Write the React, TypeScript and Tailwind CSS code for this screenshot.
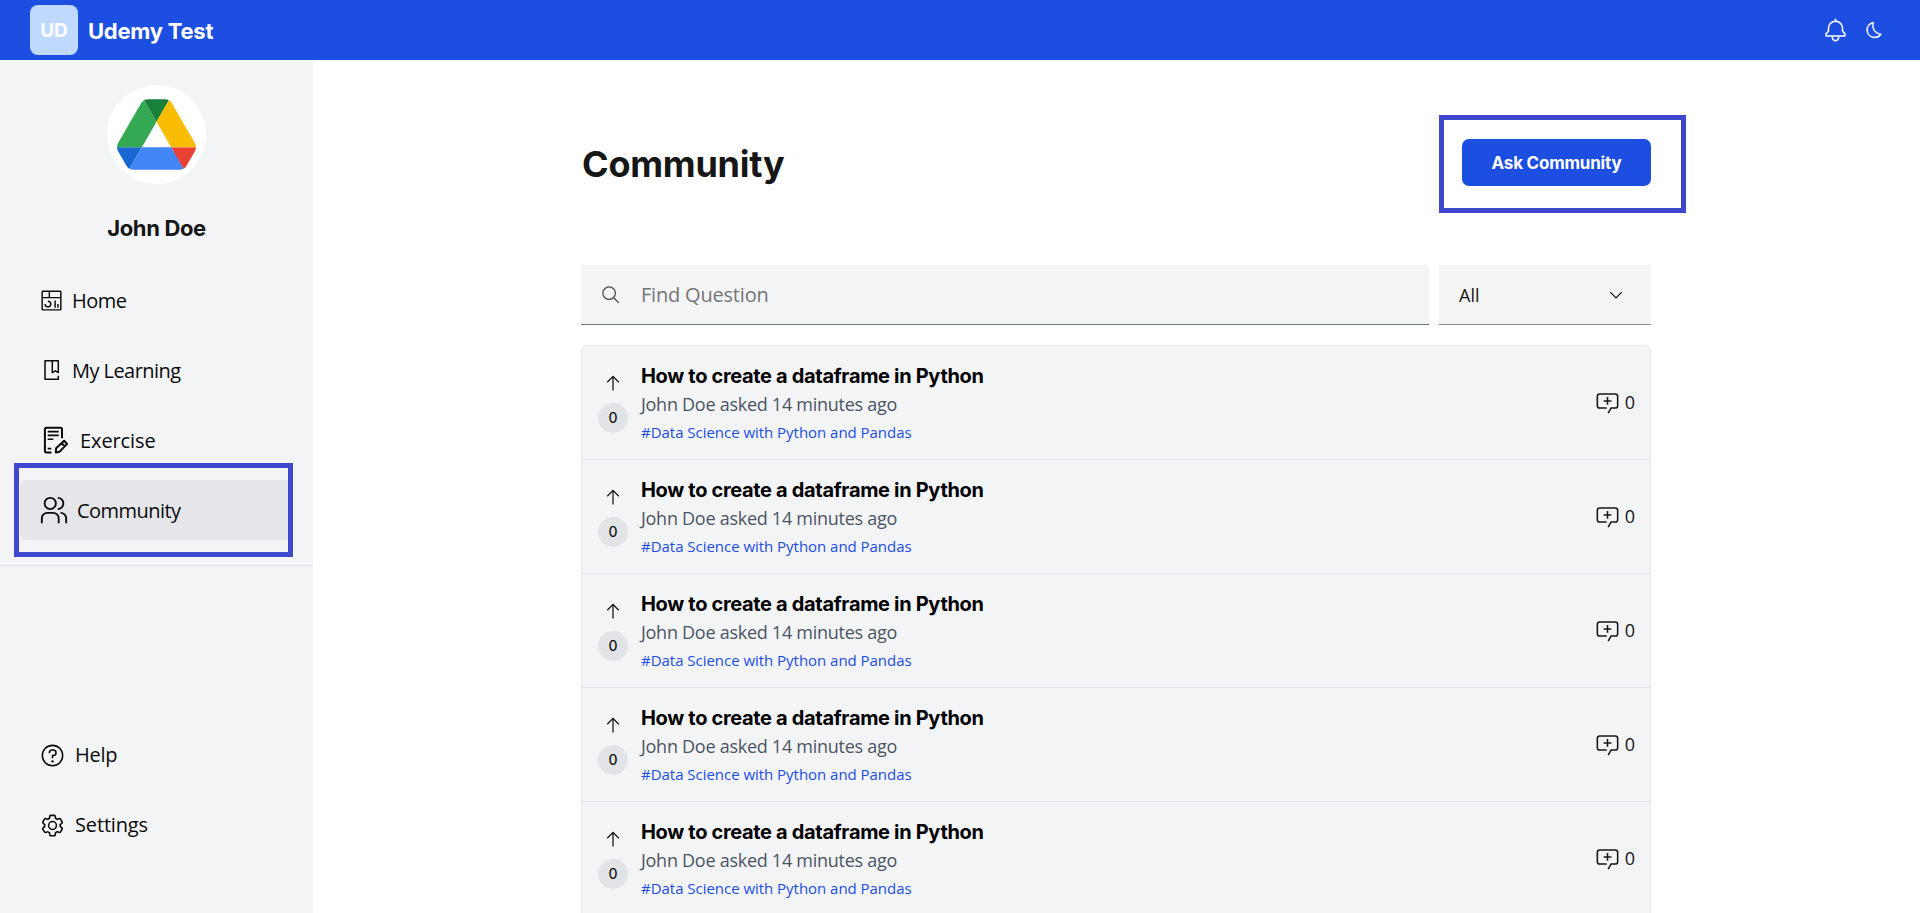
import type { ReactNode } from "react";

type IconProps = { className?: string; children: ReactNode };

function Icon({ className = "", children }: IconProps) {
  return (
    <svg viewBox="0 0 32 32" fill="currentColor" className={`shrink-0 ${className}`} aria-hidden="true">
      {children}
    </svg>
  );
}

function DriveLogo() {
  return (
    <svg viewBox="0 0 87.3 78" className="h-[71px] w-[79px]" aria-hidden="true">
      <path d="m6.6 66.85 3.85 6.65c.8 1.4 1.95 2.5 3.3 3.3l13.75-23.8h-27.5c0 1.55.4 3.1 1.2 4.5z" fill="#1967d2" />
      <path d="m43.65 25-13.75-23.8c-1.35.8-2.5 1.9-3.3 3.3l-25.4 44a9.06 9.06 0 0 0 -1.2 4.5h27.5z" fill="#34a853" />
      <path d="m73.55 76.8c1.35-.8 2.5-1.9 3.3-3.3l1.6-2.75 7.65-13.25c.8-1.4 1.2-2.95 1.2-4.5h-27.502l5.852 11.5z" fill="#ea4335" />
      <path d="m43.65 25 13.75-23.8c-1.35-.8-2.9-1.2-4.5-1.2h-18.5c-1.6 0-3.15.45-4.5 1.2z" fill="#188038" />
      <path d="m59.8 53h-32.3l-13.75 23.8c1.35.8 2.9 1.2 4.5 1.2h50.8c1.6 0 3.15-.45 4.5-1.2z" fill="#4285f4" />
      <path d="m73.4 26.5-12.7-22c-.8-1.4-1.95-2.5-3.3-3.3l-13.75 23.8 16.15 28h27.45c0-1.55-.4-3.1-1.2-4.5z" fill="#fbbc04" />
    </svg>
  );
}

function HomeIcon() {
  return (
    <Icon className="size-[23px]">
      <path d="M24 21h2v5h-2zM20 16h2v10h-2zM11 26a5.006 5.006 0 0 1-5-5h2a3 3 0 1 0 3-3v-2a5 5 0 0 1 0 10z" />
      <path d="M28 2H4a2 2 0 0 0-2 2v24a2 2 0 0 0 2 2h24a2 2 0 0 0 2-2V4a2 2 0 0 0-2-2Zm0 9H14V4h14ZM12 4v7H4V4ZM4 28V13h24v15Z" />
    </Icon>
  );
}

function LearningIcon() {
  return (
    <svg viewBox="0 0 24 24" fill="none" stroke="currentColor" strokeWidth="1.5" strokeLinejoin="round" className="size-6 shrink-0" aria-hidden="true">
      <path d="M18.3 17.8v3.5H5V2.7h13.3v11.9l-3-1.8-3 1.8V2.7" />
    </svg>
  );
}

function ExerciseIcon() {
  return (
    <svg viewBox="0 0 32 32" fill="none" stroke="currentColor" strokeWidth="2" strokeLinejoin="round" className="size-8 shrink-0" aria-hidden="true">
      <path d="M11.5 28.4H6.5A1.6 1.6 0 0 1 4.9 26.8V5.4A1.6 1.6 0 0 1 6.5 3.8h13.9A1.6 1.6 0 0 1 22 5.4v8.8" />
      <path d="M7.7 7.6h11M7.7 11.4h11M7.7 15.3h5.6M7.7 24.6h3.6" strokeWidth="1.6" />
      <path d="M15.8 28.4l.3-4.2 8-7.5 3 3.2-7.6 7.9zM21.6 19.2l3.1 3.2" />
    </svg>
  );
}

function CommunityIcon() {
  return (
    <Icon className="-ml-px size-[30px]">
      <path d="M30 30h-2v-5a5 5 0 0 0-5-5v-2a7 7 0 0 1 7 7ZM22 30h-2v-5a5 5 0 0 0-5-5H9a5 5 0 0 0-5 5v5H2v-5a7 7 0 0 1 7-7h6a7 7 0 0 1 7 7ZM20 2v2a5 5 0 0 1 0 10v2a7 7 0 0 0 0-14ZM12 4a5 5 0 1 1-5 5 5 5 0 0 1 5-5m0-2a7 7 0 1 0 7 7 7 7 0 0 0-7-7Z" />
    </Icon>
  );
}

function HelpIcon() {
  return (
    <Icon className="size-[25px]">
      <path d="M16 2a14 14 0 1 0 14 14A14 14 0 0 0 16 2Zm0 26a12 12 0 1 1 12-12 12 12 0 0 1-12 12Z" />
      <circle cx="16" cy="23.5" r="1.5" />
      <path d="M17 8h-1.5a4.49 4.49 0 0 0-4.5 4.5v.5h2v-.5a2.5 2.5 0 0 1 2.5-2.5H17a2.5 2.5 0 0 1 0 5h-2v4.5h2V17a4.5 4.5 0 0 0 0-9Z" />
    </Icon>
  );
}

function SettingsIcon() {
  return (
    <Icon className="size-[25px]">
      <path d="M27,16.76c0-.25,0-.5,0-.76s0-.51,0-.77l1.92-1.68A2,2,0,0,0,29.3,11L26.94,7a2,2,0,0,0-1.73-1,2,2,0,0,0-.64.1l-2.43.82a11.35,11.35,0,0,0-1.31-.75l-.51-2.52a2,2,0,0,0-2-1.61H13.64a2,2,0,0,0-2,1.61l-.51,2.52a11.48,11.48,0,0,0-1.32.75L7.43,6.06A2,2,0,0,0,6.79,6,2,2,0,0,0,5.06,7L2.7,11a2,2,0,0,0,.41,2.51L5,15.24c0,.25,0,.5,0,.76s0,.51,0,.77L3.11,18.45A2,2,0,0,0,2.7,21L5.06,25a2,2,0,0,0,1.73,1,2,2,0,0,0,.64-.1l2.43-.82a11.35,11.35,0,0,0,1.31.75l.51,2.52a2,2,0,0,0,2,1.61h4.72a2,2,0,0,0,2-1.61l.51-2.52a11.48,11.48,0,0,0,1.32-.75l2.42.82a2,2,0,0,0,.64.1,2,2,0,0,0,1.73-1L29.3,21a2,2,0,0,0-.41-2.51ZM25.21,24l-3.43-1.16a8.86,8.86,0,0,1-2.71,1.57L18.36,28H13.64l-.71-3.55a9.36,9.36,0,0,1-2.7-1.57L6.79,24,4.43,20l2.72-2.4a8.9,8.9,0,0,1,0-3.13L4.43,12,6.79,8l3.43,1.16a8.86,8.86,0,0,1,2.71-1.57L13.64,4h4.72l.71,3.55a9.36,9.36,0,0,1,2.7,1.57L25.21,8,27.57,12l-2.72,2.4a8.9,8.9,0,0,1,0,3.13L27.57,20Z" />
      <path d="M16,22a6,6,0,1,1,6-6A5.94,5.94,0,0,1,16,22Zm0-10a3.91,3.91,0,0,0-4,4,3.91,3.91,0,0,0,4,4,3.91,3.91,0,0,0,4-4A3.91,3.91,0,0,0,16,12Z" />
    </Icon>
  );
}

function BellIcon() {
  return (
    <Icon className="size-[25px]">
      <path d="M28.707 19.293 26 16.586V13a10.014 10.014 0 0 0-9-9.95V1h-2v2.05A10.014 10.014 0 0 0 6 13v3.586l-2.707 2.707A1 1 0 0 0 3 20v3a1 1 0 0 0 1 1h7v.777a5.152 5.152 0 0 0 4.5 5.199A5.006 5.006 0 0 0 21 25v-1h7a1 1 0 0 0 1-1v-3a1 1 0 0 0-.293-.707ZM19 25a3 3 0 0 1-6 0v-1h6Zm8-3H5v-1.586l2.707-2.707A1 1 0 0 0 8 17v-4a8 8 0 0 1 16 0v4a1 1 0 0 0 .293.707L27 20.414Z" />
    </Icon>
  );
}

function MoonIcon() {
  return (
    <Icon className="size-5">
      <path d="M13.5025,5.4136A15.0755,15.0755,0,0,0,25.096,23.6082a11.1134,11.1134,0,0,1-7.9749,3.3893c-.1385,0-.2782.0051-.4178,0A11.0944,11.0944,0,0,1,13.5025,5.4136M14.98,3a1.0024,1.0024,0,0,0-.1746.0156A13.0959,13.0959,0,0,0,16.63,28.9973c.1641.006.3282,0,.4909,0a13.0724,13.0724,0,0,0,10.702-5.5556,1.0094,1.0094,0,0,0-.7833-1.5644A13.08,13.08,0,0,1,15.8892,4.38,1.0149,1.0149,0,0,0,14.98,3Z" stroke="currentColor" strokeWidth="0.5" />
    </Icon>
  );
}

type NavItemProps = {
  icon: ReactNode;
  label: string;
  labelClass: string;
  active?: boolean;
};

function NavItem({ icon, label, labelClass, active = false }: NavItemProps) {
  return (
    <a
      href="#"
      className={`flex h-[60px] items-center rounded-l-md pl-5 text-xl text-[#0a0a0a] ${active ? "bg-[#e5e6ea]" : ""}`}
    >
      {icon}
      <span className={labelClass}>{label}</span>
    </a>
  );
}

function Sidebar() {
  return (
    <aside className="flex w-[313px] shrink-0 flex-col bg-[#f3f4f6]">
      <div className="flex flex-col items-center pt-[25px]">
        <div className="mr-[1px] flex size-[99px] items-center justify-center rounded-full bg-white">
          <DriveLogo />
        </div>
        <p className="mt-7 font-['Inter',sans-serif] text-[22px] leading-8 font-bold tracking-[-0.35px] text-[#161616]">John Doe</p>
      </div>
      <nav className="mt-[26px] flex flex-col gap-2.5 pr-5 pl-5">
        <NavItem icon={<HomeIcon />} label="Home" labelClass="ml-[9px] pt-px tracking-[-0.5px]" />
        <NavItem icon={<LearningIcon />} label="My Learning" labelClass="ml-2 pt-px tracking-[-0.55px]" />
        <NavItem icon={<ExerciseIcon />} label="Exercise" labelClass="ml-2 pt-px tracking-[-0.1px]" />
        <div className="relative">
          <NavItem icon={<CommunityIcon />} label="Community" labelClass="ml-2 pt-px tracking-[-0.55px]" active />
          <div className="pointer-events-none absolute -top-[17px] -left-1.5 h-[94px] w-[279px] border-5 border-[#3f48cc]" />
        </div>
      </nav>
      <div className="mt-[25px] border-t border-[#e1e3e7]" />
      <nav className="mt-[159px] flex flex-col gap-2.5 px-5">
        <NavItem icon={<HelpIcon />} label="Help" labelClass="ml-2.5 tracking-[-0.3px]" />
        <NavItem icon={<SettingsIcon />} label="Settings" labelClass="ml-2.5 tracking-[-0.15px]" />
      </nav>
    </aside>
  );
}

type Question = { title: string; meta: string; tag: string; votes: number; replies: number };

const questions: Question[] = Array.from({ length: 5 }, () => ({
  title: "How to create a dataframe in Python",
  meta: "John Doe asked 14 minutes ago",
  tag: "#Data Science with Python and Pandas",
  votes: 0,
  replies: 0,
}));

function QuestionRow({ question }: { question: Question }) {
  return (
    <li className="flex h-[114px] border-b border-[#e5e7eb] pr-[15px] pl-4">
      <div className="flex w-[30px] flex-col items-center pt-[27px]">
        <Icon className="size-5 text-[#161616]">
          <path d="M16 4 6 14l1.41 1.41L15 7.83V28h2V7.83l7.59 7.58L26 14z" />
        </Icon>
        <span className="mt-2.5 flex size-[30px] items-center justify-center rounded-full bg-[#e2e3e7] font-['Inter',sans-serif] text-sm font-medium text-[#161616]">
          {question.votes}
        </span>
      </div>
      <div className="ml-[13px] flex flex-1 flex-col pt-4">
        <h2 className="font-['Inter',sans-serif] text-xl leading-7 font-bold tracking-[-0.33px] text-black">{question.title}</h2>
        <p className="text-lg leading-7 tracking-[-0.27px] text-[#4b5563]">{question.meta}</p>
        <p className="text-[15px] leading-7 tracking-[-0.03px] text-[#1c4ee2]">{question.tag}</p>
      </div>
      <div className="flex items-center gap-[5px] text-lg text-[#161616]">
        <Icon className="size-[25px]">
          <path d="M17.74 30 16 29l4-7h6a2 2 0 0 0 2-2V8a2 2 0 0 0-2-2H6a2 2 0 0 0-2 2v12a2 2 0 0 0 2 2h9v2H6a4 4 0 0 1-4-4V8a4 4 0 0 1 4-4h20a4 4 0 0 1 4 4v12a4 4 0 0 1-4 4h-4.84Z" />
          <path d="M17 9h-2v4h-4v2h4v4h2v-4h4v-2h-4z" />
        </Icon>
        <span className="pb-px">{question.replies}</span>
      </div>
    </li>
  );
}

export default function App() {
  return (
    <div className="flex h-screen flex-col overflow-hidden bg-white font-['Open_Sans',sans-serif]">
      <header className="flex h-[60px] shrink-0 items-center bg-[#1c4ee2] pr-[36px] pl-[30px] font-['Inter',sans-serif] font-bold text-white">
        <div className="flex h-[50px] w-12 items-center justify-center rounded-lg bg-[#c0daff] pt-[3px] text-[19px]">UD</div>
        <span className="ml-2.5 pt-0.5 text-[22px] tracking-[-0.25px]">Udemy Test</span>
        <div className="ml-auto flex items-center gap-4">
          <BellIcon />
          <MoonIcon />
        </div>
      </header>
      <div className="flex min-h-0 flex-1">
        <Sidebar />
        <main className="ml-[268px] flex w-[1070px] flex-col pt-[79px]">
          <div className="flex h-[47px] shrink-0 items-center justify-between">
            <h1 className="pt-0.5 pl-px font-['Inter',sans-serif] text-4xl font-bold tracking-[-0.25px] text-[#161616]">Community</h1>
            <div className="relative">
              <button className="h-[47px] w-[189px] rounded-[7px] bg-[#1c4ee2] pt-0.5 font-['Inter',sans-serif] text-[17px] font-bold tracking-[-0.2px] text-white">
                Ask Community
              </button>
              <div className="pointer-events-none absolute -top-6 -left-[23px] h-[98px] w-[247px] border-5 border-[#3f48cc]" />
            </div>
          </div>
          <div className="mt-[79px] flex h-[60px] shrink-0 gap-2.5">
            <label className="flex flex-1 items-center border-b border-[#6b7280] bg-[#f3f4f6] pl-5">
              <Icon className="size-5 text-[#525252]">
                <path d="m29 27.586-7.552-7.552a11.018 11.018 0 1 0-1.414 1.414L27.586 29ZM4 13a9 9 0 1 1 9 9 9.01 9.01 0 0 1-9-9Z" />
              </Icon>
              <input
                className="ml-5 w-full bg-transparent pt-px text-xl tracking-[-0.2px] outline-none placeholder:text-[#757575]"
                placeholder="Find Question"
              />
            </label>
            <button className="flex w-[212px] items-center justify-between border-b border-[#8d8d8d] bg-[#f4f4f4] pr-[25px] pl-5 text-lg text-[#161616]">
              <span>All</span>
              <svg viewBox="0 0 16 16" fill="currentColor" className="size-5" aria-hidden="true">
                <path d="M8 11 3 6l.7-.7L8 9.6l4.3-4.3.7.7z" />
              </svg>
            </button>
          </div>
          <ul className="mt-5 shrink-0 rounded-t-md border border-[#e5e7eb] bg-[#f3f4f6]">
            {questions.map((question, index) => (
              <QuestionRow key={index} question={question} />
            ))}
          </ul>
        </main>
      </div>
    </div>
  );
}
